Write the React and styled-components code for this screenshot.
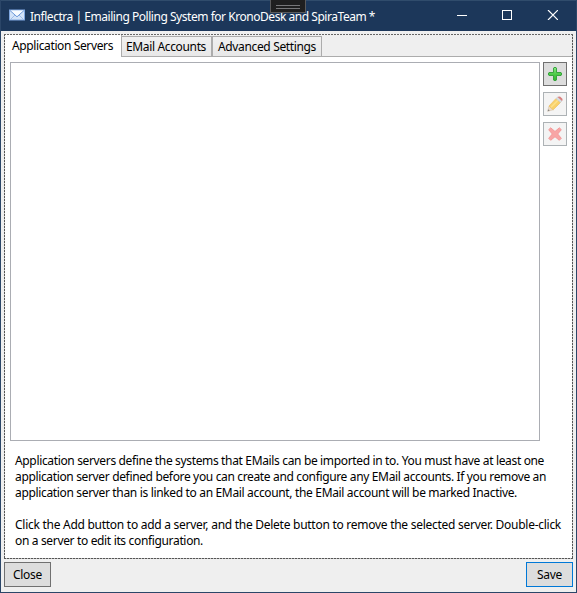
import React from 'react';
import styled, { createGlobalStyle } from 'styled-components';

const GlobalStyle = createGlobalStyle`
  * { box-sizing: border-box; }
  body { margin: 0; background: #efefef; }
`;

const Window = styled.div`
  width: 577px;
  height: 593px;
  display: flex;
  flex-direction: column;
  border: 1px solid #2b4668;
  border-top: 0;
  background: #efefef;
  color: #000;
  font: 12px/16px 'Noto Sans', 'Open Sans', sans-serif;
  overflow: hidden;
`;

const TitleBar = styled.header`
  position: relative;
  flex: none;
  height: 31px;
  display: flex;
  align-items: center;
  padding-left: 8px;
  border-top: 1px solid #304c6c;
  background: #1c375a;
  color: #fff;
`;

const Text = styled.span`
  white-space: nowrap;
  letter-spacing: ${({ $spacing }) => $spacing}px;
`;

const Title = styled(Text)`
  flex: 1;
  margin-left: 5px;
  padding-top: 2px;
`;

const CaptionButtons = styled.div`
  display: flex;
  align-self: flex-start;
  margin-right: 1px;
`;

const CaptionButton = styled.button`
  width: 45px;
  height: 28px;
  display: flex;
  align-items: center;
  justify-content: center;
  padding: 0;
  border: 0;
  background: none;
  color: #fff;
`;

const DebugHandle = styled.div`
  position: absolute;
  top: -1px;
  left: 269px;
  width: 36px;
  height: 13px;
  display: flex;
  flex-direction: column;
  align-items: center;
  gap: 2px;
  padding-top: 5px;
  border: 1px solid #5a5a5c;
  border-top: 0;
  background: #1f1f20;
`;

const HandleLine = styled.span`
  width: 24px;
  height: 1px;
  background: #77777a;
`;

const TabControl = styled.main`
  flex: none;
  height: 525px;
  margin: 3px 3px 0;
  display: flex;
  flex-direction: column;
  padding: 1px;
  background:
    repeating-linear-gradient(90deg, #666 0 2px, transparent 2px 3px) 0 0 / 100% 1px no-repeat,
    repeating-linear-gradient(90deg, #555 0 2px, #bbb 2px 3px) 0 100% / 100% 1px no-repeat,
    repeating-linear-gradient(#555 0 2px, #ccc 2px 3px) 0 0 / 1px 100% no-repeat,
    repeating-linear-gradient(#555 0 2px, #ccc 2px 3px) 100% 0 / 1px 100% no-repeat;
`;

const TabStrip = styled.nav`
  flex: none;
  height: 22px;
  display: flex;
  align-items: flex-end;
  box-shadow: inset 0 -1px #acacac;
`;

const Tab = styled.button`
  width: ${({ $width }) => $width}px;
  height: ${({ $active }) => ($active ? 22 : 21)}px;
  flex: none;
  padding: 0 0 0 ${({ $indent }) => $indent}px;
  border: 1px solid #acacac;
  border-width: ${({ $active }) => ($active ? '0 1px 0 0' : '1px 1px 1px 0')};
  background: ${({ $active }) => ($active ? '#fff' : 'linear-gradient(#f0f0f0, #e8e8e8)')};
  color: inherit;
  font: inherit;
  text-align: left;

  &:last-child {
    border-left-width: 1px;
  }
`;

const Page = styled.section`
  flex: 1;
  display: flex;
  flex-direction: column;
  padding: 5px 5px 0;
  background: #fff;
`;

const ServerArea = styled.div`
  display: flex;
  gap: 3px;
`;

const ServerList = styled.div`
  width: 530px;
  height: 379px;
  border: 1px solid #abadb3;
  background: #fff;
`;

const Tools = styled.div`
  display: flex;
  flex-direction: column;
  gap: 6px;
`;

const ToolButton = styled.button`
  width: 24px;
  height: 24px;
  display: flex;
  align-items: center;
  justify-content: center;
  padding: 0;
  border: 1px solid ${({ disabled }) => (disabled ? '#adb2b5' : '#707070')};
  background: ${({ disabled }) => (disabled ? '#f4f4f4' : '#ddd')};
`;

const Description = styled.div`
  display: flex;
  flex-direction: column;
  gap: 16px;
  padding: 12px 0 0 5px;
`;

const Paragraph = styled.p`
  display: flex;
  flex-direction: column;
  margin: 0;
`;

const Footer = styled.footer`
  display: flex;
  justify-content: space-between;
  padding: 3px 3px 0;
`;

const DialogButton = styled.button`
  width: 47px;
  height: 25px;
  padding: 0;
  border: 1px solid ${({ $primary }) => ($primary ? '#0078d7' : '#707070')};
  background: #ddd;
  color: inherit;
  font: inherit;
`;

const MailIcon = () => (
  <svg width="16" height="14" viewBox="0 0 16 14">
    <rect x="0.5" y="1" width="15" height="10" fill="#d3e3f8" stroke="#7ea6df" />
    <path d="M1 11 6 6M15 11 10 6" stroke="#9fbce8" fill="none" />
    <path d="M1 1.500 8 7.800 15 1.500" stroke="#6c98d9" fill="#f8fbff" />
  </svg>
);

const PlusIcon = () => (
  <svg width="16" height="16" viewBox="0 0 16 16">
    <defs>
      <linearGradient id="plusFill" x2="0" y2="1">
        <stop stopColor="#8be986" />
        <stop offset=".5" stopColor="#50cc4b" />
        <stop offset="1" stopColor="#30b62d" />
      </linearGradient>
    </defs>
    <path
      d="M7 1.500h2l.5.5v4.500H14l.5.5v2l-.5.500H9.500V14l-.5.500H7l-.5-.500V9.500H2L1.500 9V7L2 6.500h4.500V2z"
      fill="url(#plusFill)"
      stroke="#2f9e35"
      strokeWidth=".9"
    />
  </svg>
);

const PencilIcon = () => (
  <svg width="16" height="16" viewBox="0 0 16 16">
    <path d="M.7 15.300 2 10 6.200 13.800Z" fill="#eddcc6" stroke="#d9c5ab" strokeWidth=".6" />
    <path d="M.7 15.300 1.200 13.300 2.800 14.700Z" fill="#888" />
    <path d="M2 10 9 2.500 13.500 6.500 6.200 13.800Z" fill="#f9d16a" stroke="#edbf62" strokeWidth=".7" />
    <path d="M4 11.300 11 4.200" stroke="#fce08a" strokeWidth="1.600" />
    <path d="M9 2.500 10.500 1 15 5 13.500 6.500Z" fill="#d9dde1" stroke="#c4c8cc" strokeWidth=".5" />
    <path d="M10.500 1Q11.800 0 13.300.700L15.400 2.700Q16 3.900 15 5Z" fill="#d98080" />
  </svg>
);

const DeleteIcon = () => (
  <svg width="16" height="16" viewBox="0 0 16 16">
    <path
      d="M3.700 1.800 8 5.500 12.300 1.800 14.300 3.700 10.700 8 14.300 12.300 12.300 14.300 8 10.700 3.700 14.300 1.700 12.300 5.300 8 1.700 3.700Z"
      fill="#f8a5a5"
      stroke="#f49a9a"
      strokeLinejoin="round"
    />
  </svg>
);

const tabs = [
  { label: 'Application Servers', width: 117, indent: 7, spacing: -0.38, active: true },
  { label: 'EMail Accounts', width: 90, indent: 4, spacing: -0.354 },
  { label: 'Advanced Settings', width: 110, indent: 5, spacing: -0.352 },
];

const paragraphs = [
  [
    ['Application servers define the systems that EMails can be imported in to. You must have at least one', -0.346],
    ['application server defined before you can create and configure any EMail accounts. If you remove an', -0.35],
    ['application server than is linked to an EMail account, the EMail account will be marked Inactive.', -0.339],
  ],
  [
    ['Click the Add button to add a server, and the Delete button to remove the selected server. Double-click', -0.269],
    ['on a server to edit its configuration.', -0.342],
  ],
];

export default function App() {
  return (
    <>
      <GlobalStyle />
      <Window>
        <TitleBar>
          <MailIcon />
          <Title $spacing={-0.463}>Inflectra | Emailing Polling System for KronoDesk and SpiraTeam *</Title>
          <CaptionButtons>
            <CaptionButton aria-label="Minimize">
              <svg width="11" height="10"><path d="M0 5.500h10" stroke="currentColor" /></svg>
            </CaptionButton>
            <CaptionButton aria-label="Maximize">
              <svg width="11" height="10"><rect x=".5" y=".5" width="9" height="9" fill="none" stroke="currentColor" /></svg>
            </CaptionButton>
            <CaptionButton aria-label="Close window">
              <svg width="11" height="10"><path d="M1 0 11 10M11 0 1 10" stroke="currentColor" strokeWidth="1.200" /></svg>
            </CaptionButton>
          </CaptionButtons>
          <DebugHandle>
            <HandleLine />
            <HandleLine />
          </DebugHandle>
        </TitleBar>
        <TabControl>
          <TabStrip>
            {tabs.map((tab) => (
              <Tab key={tab.label} $width={tab.width} $indent={tab.indent} $active={tab.active}>
                <Text $spacing={tab.spacing}>{tab.label}</Text>
              </Tab>
            ))}
          </TabStrip>
          <Page>
            <ServerArea>
              <ServerList />
              <Tools>
                <ToolButton aria-label="Add"><PlusIcon /></ToolButton>
                <ToolButton aria-label="Edit" disabled><PencilIcon /></ToolButton>
                <ToolButton aria-label="Delete" disabled><DeleteIcon /></ToolButton>
              </Tools>
            </ServerArea>
            <Description>
              {paragraphs.map((lines, index) => (
                <Paragraph key={index}>
                  {lines.map(([line, spacing]) => (
                    <Text key={line} $spacing={spacing}>{line}</Text>
                  ))}
                </Paragraph>
              ))}
            </Description>
          </Page>
        </TabControl>
        <Footer>
          <DialogButton><Text $spacing={-0.291}>Close</Text></DialogButton>
          <DialogButton $primary><Text $spacing={-0.296}>Save</Text></DialogButton>
        </Footer>
      </Window>
    </>
  );
}
